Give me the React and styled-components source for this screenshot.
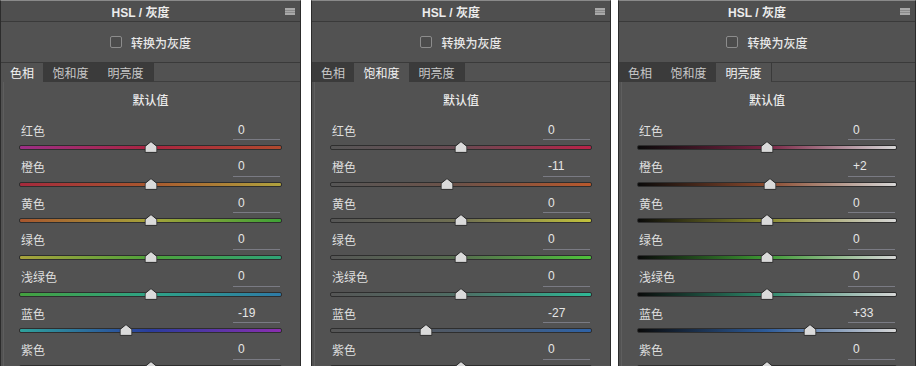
import React from "react";
import styled, { createGlobalStyle } from "styled-components";

const GlobalStyle = createGlobalStyle`
  html, body {
    margin: 0;
    padding: 0;
    background: #ffffff;
  }
  body {
    font-family: "Liberation Sans", "Noto Sans CJK SC", sans-serif;
  }
`;

const COLORS = ["红色", "橙色", "黄色", "绿色", "浅绿色", "蓝色", "紫色"];

const HUE_TRACKS = [
  ["#9c2f86", "#aa2540", "#b04a2e"],
  ["#a42a3c", "#a8582e", "#b0a23e"],
  ["#a8562e", "#a4a23a", "#3ea236"],
  ["#a8a23c", "#4ea23a", "#2ea276"],
  ["#44a03e", "#2ea286", "#2e7aa6"],
  ["#2ea29c", "#2a3c9c", "#8a2eb0"],
  ["#3440a8", "#6a34b0", "#b02e96"],
];

const SAT_TRACKS = [
  ["#565656", "#6a4a52", "#b82248"],
  ["#565656", "#6e5248", "#b8582c"],
  ["#565656", "#707052", "#c2c23c"],
  ["#565656", "#566e4e", "#4ec23a"],
  ["#565656", "#4e6e64", "#2eb896"],
  ["#565656", "#4e5a6a", "#2e62a6"],
  ["#565656", "#62506e", "#8a32b8"],
];

const LUM_TRACKS = [
  ["#0a0a0a", "#7a2444", "#d6d6d6"],
  ["#0a0a0a", "#8a4a2e", "#d6d6d6"],
  ["#0a0a0a", "#8a8a2e", "#d6d6d6"],
  ["#0a0a0a", "#3e9a34", "#d6d6d6"],
  ["#0a0a0a", "#2e8a6c", "#d6d6d6"],
  ["#0a0a0a", "#2e5c9a", "#d6d6d6"],
  ["#0a0a0a", "#8a2ea6", "#d6d6d6"],
];

const PANELS = [
  { width: 301, tab: 0, values: [0, 0, 0, 0, 0, -19, 0], tracks: HUE_TRACKS },
  { width: 300, tab: 1, values: [0, -11, 0, 0, 0, -27, 0], tracks: SAT_TRACKS },
  { width: 298, tab: 2, values: [0, 2, 0, 0, 0, 33, 0], tracks: LUM_TRACKS, signed: true },
];

const Page = styled.div`
  display: flex;
  height: 366px;
  overflow: hidden;
`;

const Gap = styled.div`
  width: ${(p) => p.$w}px;
  flex: none;
  background: #ffffff;
`;

const Panel = styled.div`
  width: ${(p) => p.$w}px;
  flex: none;
  box-sizing: border-box;
  height: 366px;
  overflow: hidden;
  background: #525252;
  border-left: 1px solid #2c2c2c;
  border-right: 1px solid #2c2c2c;
  border-top: 1px solid #8a8a8a;
  display: flex;
  flex-direction: column;
  color: #e4e4e4;
`;

const Header = styled.div`
  height: 20px;
  flex: none;
  display: flex;
  align-items: center;
  border-bottom: 1px solid #3a3a3a;
  background: #4f4f4f;
  padding-right: 20px;
  position: relative;
`;

const Title = styled.div`
  flex: 1;
  text-align: center;
  font-size: 12px;
  font-weight: bold;
  color: #ececec;
`;

const MenuIcon = styled.svg`
  position: absolute;
  right: 5px;
  top: 7px;
`;

const CheckRow = styled.div`
  height: 40px;
  flex: none;
  display: flex;
  align-items: center;
  justify-content: center;
  gap: 9px;
  font-size: 12px;
  font-weight: 500;
  color: #e8e8e8;
`;

const Checkbox = styled.div`
  width: 10px;
  height: 10px;
  border: 1px solid #8c8c8c;
  border-radius: 2px;
  background: #4c4c4c;
`;

const TabBar = styled.div`
  height: 19px;
  flex: none;
  display: flex;
  border-top: 1px solid #3a3a3a;
`;

const Tab = styled.div`
  width: ${(p) => p.$w}px;
  flex: none;
  display: flex;
  align-items: center;
  justify-content: center;
  font-size: 12px;
  color: ${(p) => (p.$active ? "#f2f2f2" : "#c8c8c8")};
  background: ${(p) => (p.$active ? "#525252" : "#3b3b3b")};
`;

const TabRest = styled.div`
  flex: 1;
  border-left: 1px solid #3a3a3a;
  border-bottom: 1px solid #3e3e3e;
  box-sizing: border-box;
`;

const Content = styled.div`
  flex: 1;
  margin-left: 2px;
  border-left: 1px solid #5e5e5e;
  padding: 0 18px 0 15px;
`;

const DefaultLabel = styled.div`
  height: 38px;
  line-height: 38px;
  text-align: center;
  font-size: 12px;
  font-weight: 500;
  color: #ececec;
`;

const Row = styled.div`
  height: 36.67px;
`;

const RowHead = styled.div`
  height: 20px;
  display: flex;
  align-items: center;
  justify-content: space-between;
`;

const Label = styled.span`
  margin-left: 2px;
  font-size: 12px;
  color: #dedede;
`;

const Value = styled.div`
  width: 47px;
  height: 20px;
  box-sizing: border-box;
  margin-right: 2px;
  padding-left: 5px;
  display: flex;
  align-items: center;
  font-size: 12px;
  color: #e6e6e6;
  border-bottom: 1px solid #7a7b84;
`;

const TrackWrap = styled.div`
  position: relative;
  margin-top: 5px;
`;

const Track = styled.div`
  height: 3px;
  border: 1px solid #2e2e2e;
  border-radius: 2px;
  background: linear-gradient(
    to right,
    ${(p) => p.$c[0]},
    ${(p) => p.$c[1]} 50%,
    ${(p) => p.$c[2]}
  );
`;

const Thumb = styled.svg`
  position: absolute;
  top: -4px;
  transform: translateX(-50%);
`;

const TABS = [
  { label: "色相", w: 42 },
  { label: "饱和度", w: 55 },
  { label: "明亮度", w: 55 },
];

const fmt = (v, signed) => (signed && v > 0 ? `+${v}` : `${v}`);

const SliderRow = ({ label, value, colors, signed }) => (
  <Row>
    <RowHead>
      <Label>{label}</Label>
      <Value>{fmt(value, signed)}</Value>
    </RowHead>
    <TrackWrap>
      <Track $c={colors} />
      <Thumb
        width="13"
        height="12"
        viewBox="0 0 13 12"
        style={{ left: `${50 + value / 2}%` }}
      >
        <path
          d="M6.5 0.6 L12.4 5.4 V11.4 H0.6 V5.4 Z"
          fill="#dadada"
          stroke="#2a2a2a"
          strokeWidth="1"
        />
      </Thumb>
    </TrackWrap>
  </Row>
);

const HslPanel = ({ width, tab, values, tracks, signed }) => (
  <Panel $w={width}>
    <Header>
      <Title>HSL / 灰度</Title>
      <MenuIcon width="10" height="7" viewBox="0 0 10 7">
        <rect x="0" y="0" width="10" height="7" fill="#a8a8a8" />
        <rect x="0" y="2" width="10" height="1" fill="#8a8a8a" />
        <rect x="0" y="4" width="10" height="1" fill="#8a8a8a" />
      </MenuIcon>
    </Header>
    <CheckRow>
      <Checkbox />
      <span>转换为灰度</span>
    </CheckRow>
    <TabBar>
      {TABS.map((t, i) => (
        <Tab key={t.label} $w={t.w} $active={i === tab}>
          {t.label}
        </Tab>
      ))}
      <TabRest />
    </TabBar>
    <Content>
      <DefaultLabel>默认值</DefaultLabel>
      {COLORS.map((c, i) => (
        <SliderRow
          key={c}
          label={c}
          value={values[i]}
          colors={tracks[i]}
          signed={signed}
        />
      ))}
    </Content>
  </Panel>
);

export default function App() {
  return (
    <>
      <GlobalStyle />
      <Page>
        <HslPanel {...PANELS[0]} />
        <Gap $w={10} />
        <HslPanel {...PANELS[1]} />
        <Gap $w={7} />
        <HslPanel {...PANELS[2]} />
      </Page>
    </>
  );
}
